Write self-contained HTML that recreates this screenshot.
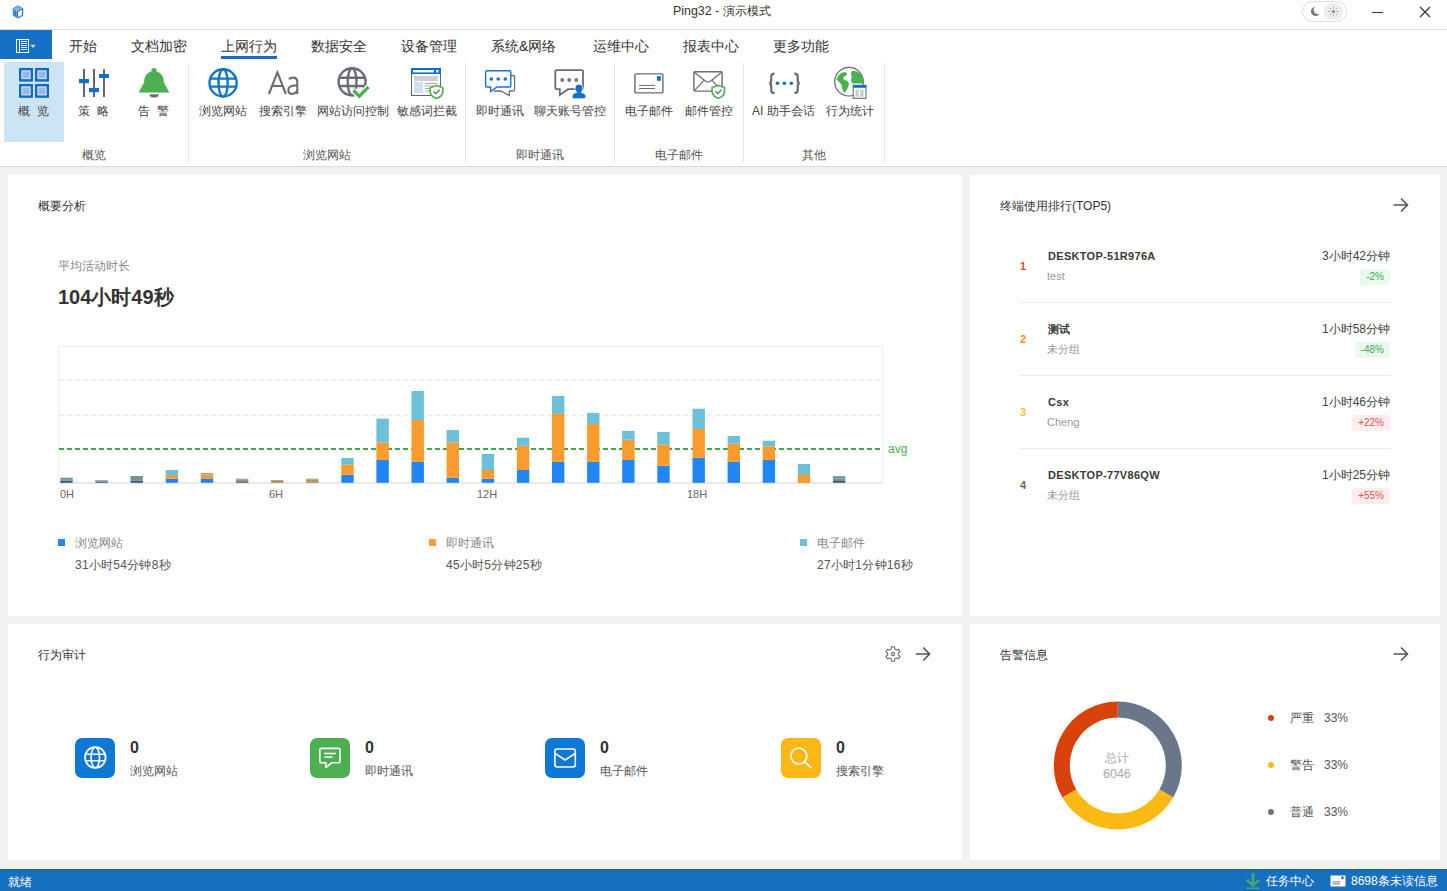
<!DOCTYPE html>
<html><head><meta charset="utf-8">
<style>
*{box-sizing:border-box;margin:0;padding:0}
html,body{width:1447px;height:891px;overflow:hidden;background:#f2f2f2;font-family:"Liberation Sans",sans-serif;color:#333}
.a{position:absolute}
.t{position:absolute;white-space:nowrap;line-height:1}
svg{position:absolute;overflow:visible}
#title{left:0;top:0;width:1447px;height:30px;background:#fff;border-bottom:1px solid #dcdcdc}
#menu{left:0;top:30px;width:1447px;height:30px;background:#fff}
#ribbon{left:0;top:60px;width:1447px;height:107px;background:#fff;border-bottom:1px solid #dadada}
.card{position:absolute;background:#fff}
.sep{position:absolute;width:1px;background:#e3e3e3;top:63px;height:99px}
.rl{font-size:12px;color:#444}
.gl{font-size:12px;color:#555}
.tab{font-size:14px;color:#333}
.rname{font-size:11px;font-weight:bold;color:#3a3a3a;letter-spacing:0.3px}
.badge{font-size:10px;line-height:16px;height:16px;padding:0 6px;border-radius:3px}
#status{left:0;top:869px;width:1447px;height:22px;background:#176fbf;border-top:1px solid #1c5f9f}
</style></head><body>
<!-- title bar -->
<div id="title" class="a"></div>
<div class="t" style="left:673px;top:5px;font-size:12.4px;color:#333">Ping32 - 演示模式</div>
<svg style="left:12px;top:5px" width="12" height="14" viewBox="0 0 12 14">
 <path d="M6 1.2 L10.6 3.8 L10.6 10.2 L6 12.8 L1.4 10.2 L1.4 3.8 Z" fill="#fff" stroke="#2b7fd6" stroke-width="1.3" stroke-linejoin="round"/>
 <path d="M1.6 4 L6 1.5 L10.4 4 L6 6.5 Z" fill="#7db5ee"/>
 <path d="M1.6 4.2 L5.4 6.6 L5.4 12.3 L1.6 10 Z" fill="#5fa1e8"/>
 <path d="M3.3 5.5 V10.6" stroke="#1b62b5" stroke-width="1"/>
 <path d="M5.5 6.6 L10.4 4 M5.5 6.6 V12.4" stroke="#1f6cc0" stroke-width="1"/>
</svg>
<div class="a" style="left:1302px;top:1px;width:45px;height:21px;border:1px solid #ddd;border-radius:11px;background:#fff"></div>
<div class="a" style="left:1324px;top:3px;width:19px;height:17px;border-radius:8px;background:#eee"></div>
<svg style="left:1309px;top:6px" width="11" height="11" viewBox="0 0 11 11"><path d="M6 1 A4.5 4.5 0 1 0 10.5 7.5 A4 4 0 0 1 6 1 Z" fill="#777"/></svg>
<svg style="left:1328px;top:6px" width="11" height="11" viewBox="0 0 11 11"><circle cx="5.5" cy="5.5" r="1.6" fill="#888"/><path d="M5.5 0.5V2.5M5.5 8.5V10.5M0.5 5.5H2.5M8.5 5.5H10.5M2 2L3.2 3.2M7.8 7.8L9 9M2 9L3.2 7.8M7.8 3.2L9 2" stroke="#999" stroke-width="0.9"/></svg>
<div class="a" style="left:1372px;top:12px;width:11px;height:1.3px;background:#333"></div>
<svg style="left:1419px;top:6px" width="12" height="12" viewBox="0 0 12 12"><path d="M1 1L11 11M11 1L1 11" stroke="#333" stroke-width="1.3"/></svg>

<!-- menu -->
<div id="menu" class="a"></div>
<div class="a" style="left:0;top:30px;width:52px;height:29px;background:#1470c4"></div>
<svg style="left:16px;top:39px" width="22" height="14" viewBox="0 0 22 14">
 <rect x="0.5" y="0.5" width="12" height="13" fill="none" stroke="#fff" stroke-width="1"/>
 <path d="M3.5 1V13" stroke="#fff" stroke-width="1"/>
 <path d="M5 2.5H11M5 4.5H11M5 6.5H11M5 8.5H11M5 10.5H11" stroke="#fff" stroke-width="0.9"/>
 <path d="M14.3 5.8L19.7 5.8L17 9Z" fill="#cfe0f5"/>
</svg>
<div class="t tab" style="left:69px;top:39px">开始</div>
<div class="t tab" style="left:131px;top:39px">文档加密</div>
<div class="t tab" style="left:221px;top:39px">上网行为</div>
<div class="a" style="left:221px;top:56px;width:56px;height:3px;background:#1a6ac0"></div>
<div class="t tab" style="left:311px;top:39px">数据安全</div>
<div class="t tab" style="left:401px;top:39px">设备管理</div>
<div class="t tab" style="left:491px;top:39px">系统&amp;网络</div>
<div class="t tab" style="left:593px;top:39px">运维中心</div>
<div class="t tab" style="left:683px;top:39px">报表中心</div>
<div class="t tab" style="left:773px;top:39px">更多功能</div>

<!-- ribbon -->
<div id="ribbon" class="a"></div>
<div class="a" style="left:4px;top:62px;width:60px;height:80px;background:#cde3f6"></div>
<div class="sep" style="left:188px"></div>
<div class="sep" style="left:465px"></div>
<div class="sep" style="left:614px"></div>
<div class="sep" style="left:743px"></div>
<div class="sep" style="left:884px"></div>
<svg style="left:0;top:60px" width="900" height="110" viewBox="0 60 900 110">
 <!-- grid -->
 <g stroke="#0e6cc9" stroke-width="2.4" fill="#93b8e7">
  <rect x="20.2" y="69.2" width="11.6" height="11.2"/><rect x="36.2" y="69.2" width="11.6" height="11.2"/>
  <rect x="20.2" y="85.2" width="11.6" height="11.4"/><rect x="36.2" y="85.2" width="11.6" height="11.4"/>
 </g>
 <g stroke="#e8f1fb" stroke-width="0.8" fill="none">
  <rect x="22" y="71" width="8" height="7.6"/><rect x="38" y="71" width="8" height="7.6"/>
  <rect x="22" y="87" width="8" height="7.8"/><rect x="38" y="87" width="8" height="7.8"/>
 </g>
 <!-- sliders -->
 <g fill="#62666d"><rect x="83" y="69" width="2" height="28"/><rect x="93" y="69" width="2" height="28"/><rect x="103" y="69" width="2" height="28"/></g>
 <g fill="#1270cc"><rect x="79" y="79" width="10" height="4.2"/><rect x="89" y="88" width="10" height="4.2"/><rect x="99" y="74" width="10" height="4.1"/></g>
 <!-- bell -->
 <path d="M149.5 94.2 A4.65 3.4 0 0 0 158.8 94.2 Z" fill="#6b7079"/>
 <circle cx="154" cy="70.6" r="2.6" fill="#4caf50"/>
 <path d="M139 92.2 L144.4 82.5 C144.4 75.8 147.8 71.6 154 71.6 C160.2 71.6 163.6 75.8 163.6 82.5 L168.9 92.2 Z" fill="#4caf50" stroke="#4caf50" stroke-width="0.6" stroke-linejoin="round"/>
 <!-- globe blue -->
 <g fill="none" stroke="#1473cc" stroke-width="2.4">
  <circle cx="223.1" cy="82.9" r="13.6"/>
  <ellipse cx="223.1" cy="82.9" rx="4.6" ry="13.6"/>
  <path d="M210 78.6H236.2M210 86.6H236.2"/>
 </g>
 <!-- globe gray + check -->
 <g fill="none" stroke="#686c74" stroke-width="2.4">
  <circle cx="352.1" cy="81.8" r="13.5"/>
  <ellipse cx="352.1" cy="81.8" rx="4.4" ry="13.5"/>
  <path d="M339 77.8H365.2M339 86H365.2"/>
 </g>
 <path d="M353.5 90.5 L359.4 96.2 L368.5 86.8" fill="none" stroke="#fff" stroke-width="6"/>
 <path d="M353.5 90.5 L359.4 96.2 L368.5 86.8" fill="none" stroke="#4caf50" stroke-width="3.2"/>
 <!-- window shield -->
 <rect x="411.5" y="68.5" width="29" height="27" fill="#fff" stroke="#5f6670" stroke-width="1"/>
 <rect x="411" y="68" width="30" height="6" fill="#0f6dc8"/>
 <rect x="413" y="70" width="21" height="2.4" fill="#fff"/><rect x="436" y="70" width="2.6" height="2.4" fill="#fff"/>
 <rect x="414" y="76" width="24" height="5" fill="#cfcfd1"/>
 <rect x="414" y="82" width="9" height="11" fill="#cfe1f3"/>
 <g stroke="#8a8e94" stroke-width="0.8"><path d="M425 83.5H437M425 86H434M425 88.5H432M425 91H431"/></g>
 <path d="M436.5 85.6 L442.8 87.8 L442.8 91.5 C442.8 95 440 97.3 436.5 98.5 C433 97.3 430.2 95 430.2 91.5 L430.2 87.8 Z" fill="#fff" stroke="#4caf50" stroke-width="1.6"/>
 <path d="M433.5 91.5 L435.8 93.7 L439.6 89.8" fill="none" stroke="#5f6670" stroke-width="1.3"/>
 <!-- chat blue -->
 <path d="M494 75.5 H513 Q514.6 75.5 514.6 77 V89.5 Q514.6 91 513 91 H509.3 V95.6 L501 91 H494" fill="#fff" stroke="#6b6f76" stroke-width="1.3"/>
 <path d="M487 70.8 H509.3 Q510.8 70.8 510.8 72.3 V85.5 Q510.8 87 509.3 87 H497 L490.6 91.6 V87 H487 Q485.6 87 485.6 85.5 V72.3 Q485.6 70.8 487 70.8 Z" fill="#fff" stroke="#1873cc" stroke-width="1.4"/>
 <g fill="#1873cc"><circle cx="491.3" cy="79" r="1.8"/><circle cx="498.2" cy="79" r="1.8"/><circle cx="505.3" cy="79" r="1.8"/></g>
 <!-- chat gray person -->
 <path d="M556.5 70.2 H581.8 Q583 70.2 583 71.5 V88 Q583 89.2 581.8 89.2 H568 L559.8 95 V89.2 H556.5 Q555.3 89.2 555.3 88 V71.5 Q555.3 70.2 556.5 70.2 Z" fill="#fff" stroke="#686c74" stroke-width="1.8"/>
 <g fill="#73777e"><circle cx="562.2" cy="80" r="1.9"/><circle cx="569.2" cy="80" r="1.9"/><circle cx="576.3" cy="80" r="1.9"/></g>
 <path d="M578.9 84.2 C576.5 84.2 575 86 575 88.5 C575 90.3 575.8 91.6 576.9 92.3 C573.5 93.2 572 94.6 572 97 Q572 98.8 574 98.8 H584 Q586 98.8 586 97 C586 94.6 584.5 93.2 581 92.3 C582.1 91.6 582.9 90.3 582.9 88.5 C582.9 86 581.3 84.2 578.9 84.2 Z" fill="#1270cc" stroke="#fff" stroke-width="0.8"/>
 <!-- envelope 1 -->
 <rect x="634.9" y="73.9" width="28" height="19" rx="1" fill="#fff" stroke="#686c74" stroke-width="1.4"/>
 <rect x="657" y="76.1" width="3.8" height="4.7" fill="#1270cc"/>
 <path d="M639.1 85.4H654.9M639.1 88.5H654.9" stroke="#686c74" stroke-width="1"/>
 <!-- envelope 2 -->
 <rect x="693.9" y="71.7" width="28.2" height="19.4" rx="1" fill="#fff" stroke="#686c74" stroke-width="1.4"/>
 <path d="M694.3 72.3 L705 80.8 Q708 83.2 711 80.8 L721.7 72.3 M694.3 90.6 L703.8 80.6 M712.2 80.6 L721.7 90.6" fill="none" stroke="#686c74" stroke-width="1.2"/>
 <path d="M718.3 85.4 L724.5 87.6 L724.5 91.3 C724.5 94.8 721.8 97.1 718.3 98.3 C714.8 97.1 712.1 94.8 712.1 91.3 L712.1 87.6 Z" fill="#fff" stroke="#4caf50" stroke-width="1.6"/>
 <path d="M715.4 91.4 L717.7 93.6 L721.4 89.7" fill="none" stroke="#5f6670" stroke-width="1.3"/>
 <!-- braces -->
 <g fill="none" stroke="#686c74" stroke-width="2.2">
  <path d="M774.5 73.6 Q771.2 73.6 771.2 76.5 V80.8 Q771.2 83 769.3 83.3 Q771.2 83.6 771.2 85.8 V90.2 Q771.2 93 774.5 93"/>
  <path d="M794.4 73.6 Q797.7 73.6 797.7 76.5 V80.8 Q797.7 83 799.6 83.3 Q797.7 83.6 797.7 85.8 V90.2 Q797.7 93 794.4 93"/>
 </g>
 <g fill="#1270cc"><circle cx="777.5" cy="83.2" r="1.8"/><circle cx="784.4" cy="83.2" r="1.8"/><circle cx="791.3" cy="83.2" r="1.8"/></g>
 <!-- globe chart -->
 <circle cx="849" cy="81.7" r="14.3" fill="#fff" stroke="#65686e" stroke-width="1.2"/>
 <path d="M840 74 C842 72 846 71.5 847 73.5 C847.5 75 845 76 843.5 77.5 C842.5 78.5 844 80 846 80.5 C848.5 81 849.5 83 848.5 86 C847.8 88.5 846 90.5 845 93 C842.5 91.5 842 88 841.5 85.5 C841 83 838 81 836.5 79.5 C837 77.5 838.5 75.5 840 74 Z" fill="#4caf50"/>
 <path d="M852.5 71 C856 70.5 860 72.5 862 75.5 C863.5 78 863.5 81 862.5 83.5 L853 83.5 C851 82.5 850.5 80 851.5 78 C852.5 76 850.5 74.5 851 73 C851.3 72 851.8 71.3 852.5 71 Z" fill="#4caf50"/>
 <rect x="853.2" y="85.3" width="12.8" height="13" fill="#fff" stroke="#5f6368" stroke-width="1"/>
 <rect x="853" y="85" width="13.2" height="2.8" fill="#1270cc"/>
 <rect x="855.5" y="89.5" width="3.3" height="7.3" fill="#c9cbce"/><rect x="860.2" y="89.5" width="3.3" height="7.3" fill="#c9cbce"/>
</svg>
<svg style="left:260px;top:66px" width="45" height="32" viewBox="260 66 45 32"><g fill="none" stroke="#696d76" stroke-width="2.1"><path d="M268.9 94 L277.4 72.4 L285.9 94 M271.6 86 H283.2"/><path d="M288.9 79.3 C290 78.2 291.5 77.6 293.2 77.6 C296 77.6 297.3 79.3 297.3 82.2 V94 M297.3 85.2 C293.5 85.2 288.3 85.6 288.3 89.9 C288.3 92.4 289.9 93.9 292.2 93.9 C294.8 93.9 296.6 92.3 297.3 90"/></g></svg>

<div class="t rl" style="left:18px;top:105px">概&nbsp;&nbsp;览</div>
<div class="t rl" style="left:78px;top:105px">策&nbsp;&nbsp;略</div>
<div class="t rl" style="left:138px;top:105px">告&nbsp;&nbsp;警</div>
<div class="t rl" style="left:199px;top:105px">浏览网站</div>
<div class="t rl" style="left:259px;top:105px">搜索引擎</div>
<div class="t rl" style="left:317px;top:105px">网站访问控制</div>
<div class="t rl" style="left:397px;top:105px">敏感词拦截</div>
<div class="t rl" style="left:476px;top:105px">即时通讯</div>
<div class="t rl" style="left:534px;top:105px">聊天账号管控</div>
<div class="t rl" style="left:625px;top:105px">电子邮件</div>
<div class="t rl" style="left:685px;top:105px">邮件管控</div>
<div class="t rl" style="left:752px;top:105px">AI 助手会话</div>
<div class="t rl" style="left:826px;top:105px">行为统计</div>
<div class="t gl" style="left:82px;top:149px">概览</div>
<div class="t gl" style="left:303px;top:149px">浏览网站</div>
<div class="t gl" style="left:516px;top:149px">即时通讯</div>
<div class="t gl" style="left:655px;top:149px">电子邮件</div>
<div class="t gl" style="left:802px;top:149px">其他</div>

<!-- cards -->
<div class="card" style="left:8px;top:175px;width:954px;height:441px"></div>
<div class="card" style="left:970px;top:175px;width:470px;height:441px"></div>
<div class="card" style="left:8px;top:624px;width:954px;height:236px"></div>
<div class="card" style="left:970px;top:624px;width:470px;height:236px"></div>

<div class="t" style="left:38px;top:200px;font-size:12px;color:#333">概要分析</div>
<div class="t" style="left:58px;top:260px;font-size:12px;color:#888">平均活动时长</div>
<div class="t" style="left:58px;top:287px;font-size:20px;font-weight:bold;color:#333">104小时49秒</div>
<svg style="left:0;top:340px" width="960" height="170" viewBox="0 340 960 170">
 <rect x="58.5" y="346.5" width="824" height="136.5" fill="none" stroke="#efefef" stroke-width="1"/>
 <path d="M59 380H882M59 415H882" stroke="#e2e2e2" stroke-width="1.2" stroke-dasharray="5 3"/>
 <path d="M59 483H882" stroke="#e6e6e6" stroke-width="1.5"/>
 <path d="M59 449H882" stroke="#46a24c" stroke-width="2" stroke-dasharray="5 3"/>
 <rect x="60.3" y="480.5" width="12.4" height="2.3" fill="#2e5c8e"/>
<rect x="60.3" y="479.2" width="12.4" height="1.3" fill="#8b8d78"/>
<rect x="60.3" y="477.7" width="12.4" height="1.5" fill="#5b97ab"/>
<rect x="95.4" y="481.5" width="12.4" height="1.3" fill="#2e5c8e"/>
<rect x="95.4" y="480.5" width="12.4" height="1.0" fill="#8b8d78"/>
<rect x="95.4" y="480.0" width="12.4" height="0.5" fill="#5b97ab"/>
<rect x="130.5" y="480.5" width="12.4" height="2.3" fill="#2e5c8e"/>
<rect x="130.5" y="478.0" width="12.4" height="2.5" fill="#8b8d78"/>
<rect x="130.5" y="476.0" width="12.4" height="2.0" fill="#5b97ab"/>
<rect x="165.7" y="478.7" width="12.4" height="4.1" fill="#1f86f3"/>
<rect x="165.7" y="475.0" width="12.4" height="3.7" fill="#f99c2d"/>
<rect x="165.7" y="470.0" width="12.4" height="5.0" fill="#6cc0d8"/>
<rect x="200.8" y="479.0" width="12.4" height="3.8" fill="#1f86f3"/>
<rect x="200.8" y="474.5" width="12.4" height="4.5" fill="#f99c2d"/>
<rect x="200.8" y="473.0" width="12.4" height="1.5" fill="#8fa6a8"/>
<rect x="235.9" y="481.3" width="12.4" height="1.5" fill="#3d5f86"/>
<rect x="235.9" y="479.5" width="12.4" height="1.8" fill="#c08a45"/>
<rect x="235.9" y="478.7" width="12.4" height="0.8" fill="#5b97ab"/>
<rect x="271.0" y="482.0" width="12.4" height="0.8" fill="#9a8f70"/>
<rect x="271.0" y="480.5" width="12.4" height="1.5" fill="#c08a45"/>
<rect x="271.0" y="480.0" width="12.4" height="0.5" fill="#5b97ab"/>
<rect x="306.1" y="481.3" width="12.4" height="1.5" fill="#9a8f70"/>
<rect x="306.1" y="479.5" width="12.4" height="1.8" fill="#c08a45"/>
<rect x="306.1" y="478.7" width="12.4" height="0.8" fill="#9a8f70"/>
<rect x="341.3" y="474.8" width="12.4" height="8.0" fill="#1f86f3"/>
<rect x="341.3" y="464.6" width="12.4" height="10.2" fill="#f99c2d"/>
<rect x="341.3" y="458.0" width="12.4" height="6.6" fill="#6cc0d8"/>
<rect x="376.4" y="459.9" width="12.4" height="22.9" fill="#1f86f3"/>
<rect x="376.4" y="442.5" width="12.4" height="17.4" fill="#f99c2d"/>
<rect x="376.4" y="418.7" width="12.4" height="23.8" fill="#6cc0d8"/>
<rect x="411.5" y="461.9" width="12.4" height="20.9" fill="#1f86f3"/>
<rect x="411.5" y="420.0" width="12.4" height="41.9" fill="#f99c2d"/>
<rect x="411.5" y="391.0" width="12.4" height="29.0" fill="#6cc0d8"/>
<rect x="446.6" y="477.7" width="12.4" height="5.1" fill="#1f86f3"/>
<rect x="446.6" y="442.5" width="12.4" height="35.2" fill="#f99c2d"/>
<rect x="446.6" y="430.0" width="12.4" height="12.5" fill="#6cc0d8"/>
<rect x="481.7" y="478.7" width="12.4" height="4.1" fill="#1f86f3"/>
<rect x="481.7" y="470.0" width="12.4" height="8.7" fill="#f99c2d"/>
<rect x="481.7" y="453.9" width="12.4" height="16.1" fill="#6cc0d8"/>
<rect x="516.9" y="470.0" width="12.4" height="12.8" fill="#1f86f3"/>
<rect x="516.9" y="445.8" width="12.4" height="24.2" fill="#f99c2d"/>
<rect x="516.9" y="437.7" width="12.4" height="8.1" fill="#6cc0d8"/>
<rect x="552.0" y="461.9" width="12.4" height="20.9" fill="#1f86f3"/>
<rect x="552.0" y="413.9" width="12.4" height="48.0" fill="#f99c2d"/>
<rect x="552.0" y="395.9" width="12.4" height="18.0" fill="#6cc0d8"/>
<rect x="587.1" y="461.9" width="12.4" height="20.9" fill="#1f86f3"/>
<rect x="587.1" y="423.9" width="12.4" height="38.0" fill="#f99c2d"/>
<rect x="587.1" y="412.9" width="12.4" height="11.0" fill="#6cc0d8"/>
<rect x="622.2" y="460.0" width="12.4" height="22.8" fill="#1f86f3"/>
<rect x="622.2" y="439.7" width="12.4" height="20.3" fill="#f99c2d"/>
<rect x="622.2" y="430.9" width="12.4" height="8.8" fill="#6cc0d8"/>
<rect x="657.3" y="465.8" width="12.4" height="17.0" fill="#1f86f3"/>
<rect x="657.3" y="444.6" width="12.4" height="21.2" fill="#f99c2d"/>
<rect x="657.3" y="432.0" width="12.4" height="12.6" fill="#6cc0d8"/>
<rect x="692.5" y="457.8" width="12.4" height="25.0" fill="#1f86f3"/>
<rect x="692.5" y="429.0" width="12.4" height="28.8" fill="#f99c2d"/>
<rect x="692.5" y="408.7" width="12.4" height="20.3" fill="#6cc0d8"/>
<rect x="727.6" y="461.8" width="12.4" height="21.0" fill="#1f86f3"/>
<rect x="727.6" y="443.7" width="12.4" height="18.1" fill="#f99c2d"/>
<rect x="727.6" y="436.0" width="12.4" height="7.7" fill="#6cc0d8"/>
<rect x="762.7" y="460.0" width="12.4" height="22.8" fill="#1f86f3"/>
<rect x="762.7" y="446.3" width="12.4" height="13.7" fill="#f99c2d"/>
<rect x="762.7" y="440.8" width="12.4" height="5.5" fill="#6cc0d8"/>
<rect x="797.8" y="483.0" width="12.4" height="-0.2" fill="#1f86f3"/>
<rect x="797.8" y="475.0" width="12.4" height="8.0" fill="#f99c2d"/>
<rect x="797.8" y="464.0" width="12.4" height="11.0" fill="#6cc0d8"/>
<rect x="832.9" y="481.0" width="12.4" height="1.8" fill="#2e5c8e"/>
<rect x="832.9" y="478.5" width="12.4" height="2.5" fill="#8b8d78"/>
<rect x="832.9" y="476.2" width="12.4" height="2.3" fill="#5b97ab"/>
</svg>
<div class="t" style="left:888px;top:443px;font-size:12px;color:#4caf50">avg</div>
<div class="t" style="left:60px;top:489px;font-size:11px;color:#666">0H</div>
<div class="t" style="left:269px;top:489px;font-size:11px;color:#666">6H</div>
<div class="t" style="left:477px;top:489px;font-size:11px;color:#666">12H</div>
<div class="t" style="left:687px;top:489px;font-size:11px;color:#666">18H</div>
<div class="a" style="left:58px;top:539px;width:7px;height:7px;background:#1f86f3"></div>
<div class="t" style="left:75px;top:537px;font-size:12px;color:#888">浏览网站</div>
<div class="t" style="left:75px;top:559px;font-size:12px;color:#555;letter-spacing:0.25px">31小时54分钟8秒</div>
<div class="a" style="left:429px;top:539px;width:7px;height:7px;background:#f0a040"></div>
<div class="t" style="left:446px;top:537px;font-size:12px;color:#888">即时通讯</div>
<div class="t" style="left:446px;top:559px;font-size:12px;color:#555;letter-spacing:0.25px">45小时5分钟25秒</div>
<div class="a" style="left:800px;top:539px;width:7px;height:7px;background:#6cc0d8"></div>
<div class="t" style="left:817px;top:537px;font-size:12px;color:#888">电子邮件</div>
<div class="t" style="left:817px;top:559px;font-size:12px;color:#555;letter-spacing:0.25px">27小时1分钟16秒</div>
<div class="t" style="left:1000px;top:200px;font-size:12px;color:#333">终端使用排行(TOP5)</div>
<svg style="left:1392px;top:197px" width="17" height="16" viewBox="0 0 17 16"><path d="M1.5 8H15.5M9 1.5L15.5 8L9 14.5" fill="none" stroke="#555" stroke-width="1.6"/></svg>
<div class="t" style="left:1020px;top:260.5px;font-size:11px;font-weight:bold;color:#d8501c">1</div>
<div class="t rname" style="left:1048px;top:251px">DESKTOP-51R976A</div>
<div class="t" style="left:1047px;top:271px;font-size:11px;color:#999">test</div>
<div class="t" style="right:57px;top:250px;font-size:12px;color:#444">3小时42分钟</div>
<div class="t badge" style="right:57px;top:269px;background:#eaf8ee;color:#3dae5a">-2%</div>
<div class="a" style="left:1019px;top:302px;width:372px;height:1px;background:#ececec"></div>
<div class="t" style="left:1020px;top:333.5px;font-size:11px;font-weight:bold;color:#e8912d">2</div>
<div class="t rname" style="left:1048px;top:324px">测试</div>
<div class="t" style="left:1047px;top:344px;font-size:11px;color:#999">未分组</div>
<div class="t" style="right:57px;top:323px;font-size:12px;color:#444">1小时58分钟</div>
<div class="t badge" style="right:57px;top:342px;background:#eaf8ee;color:#3dae5a">-48%</div>
<div class="a" style="left:1019px;top:375px;width:372px;height:1px;background:#ececec"></div>
<div class="t" style="left:1020px;top:406.5px;font-size:11px;font-weight:bold;color:#f4bf2a">3</div>
<div class="t rname" style="left:1048px;top:397px">Csx</div>
<div class="t" style="left:1047px;top:417px;font-size:11px;color:#999">Cheng</div>
<div class="t" style="right:57px;top:396px;font-size:12px;color:#444">1小时46分钟</div>
<div class="t badge" style="right:57px;top:415px;background:#fdeded;color:#d9534f">+22%</div>
<div class="a" style="left:1019px;top:448px;width:372px;height:1px;background:#ececec"></div>
<div class="t" style="left:1020px;top:479.5px;font-size:11px;font-weight:bold;color:#666">4</div>
<div class="t rname" style="left:1048px;top:470px">DESKTOP-77V86QW</div>
<div class="t" style="left:1047px;top:490px;font-size:11px;color:#999">未分组</div>
<div class="t" style="right:57px;top:469px;font-size:12px;color:#444">1小时25分钟</div>
<div class="t badge" style="right:57px;top:488px;background:#fdeded;color:#d9534f">+55%</div>
<div class="t" style="left:38px;top:649px;font-size:12px;color:#333">行为审计</div>
<svg style="left:884px;top:645px" width="18" height="18" viewBox="0 0 18 18"><path d="M7.6 1.8 H10.4 L10.9 4.1 L12.4 5 L14.6 4.2 L16 6.6 L14.3 8.2 V9.8 L16 11.4 L14.6 13.8 L12.4 13 L10.9 13.9 L10.4 16.2 H7.6 L7.1 13.9 L5.6 13 L3.4 13.8 L2 11.4 L3.7 9.8 V8.2 L2 6.6 L3.4 4.2 L5.6 5 L7.1 4.1 Z" fill="none" stroke="#666" stroke-width="1.1" stroke-linejoin="round"/><circle cx="9" cy="9" r="1.6" fill="none" stroke="#666" stroke-width="1.1"/></svg>
<svg style="left:915px;top:646px" width="16" height="16" viewBox="0 0 16 16"><path d="M0.8 8H14.5M8.2 1.5L14.6 8L8.2 14.5" fill="none" stroke="#555" stroke-width="1.6"/></svg>
<div class="a" style="left:75px;top:738px;width:40px;height:40px;border-radius:7px;background:#0e78d6"></div>
<svg style="left:75px;top:738px" width="40" height="40" viewBox="0 0 40 40"><circle cx="20.3" cy="19.5" r="10.3" fill="none" stroke="#fff" stroke-width="1.8"/><ellipse cx="20.3" cy="19.5" rx="4.2" ry="10.3" fill="none" stroke="#fff" stroke-width="1.6"/><path d="M10.5 16.2H30M10.5 22.8H30" stroke="#fff" stroke-width="1.6"/></svg>
<div class="t" style="left:130px;top:740px;font-size:16px;font-weight:bold;color:#333">0</div>
<div class="t" style="left:130px;top:765px;font-size:12px;color:#555">浏览网站</div>
<div class="a" style="left:310px;top:738px;width:40px;height:40px;border-radius:7px;background:#4caf50"></div>
<svg style="left:310px;top:738px" width="40" height="40" viewBox="0 0 40 40"><path d="M11.4 10.4 H28.4 Q30 10.4 30 12 V23.2 Q30 24.8 28.4 24.8 H21.5 L15.9 29.6 V24.8 H11.4 Q9.8 24.8 9.8 23.2 V12 Q9.8 10.4 11.4 10.4 Z" fill="none" stroke="#fff" stroke-width="1.6" stroke-linejoin="round"/><path d="M14 15.4H26M14.5 18.9H22.5" stroke="#fff" stroke-width="1.5"/></svg>
<div class="t" style="left:365px;top:740px;font-size:16px;font-weight:bold;color:#333">0</div>
<div class="t" style="left:365px;top:765px;font-size:12px;color:#555">即时通讯</div>
<div class="a" style="left:545px;top:738px;width:40px;height:40px;border-radius:7px;background:#0e78d6"></div>
<svg style="left:545px;top:738px" width="40" height="40" viewBox="0 0 40 40"><rect x="9.9" y="11" width="20.4" height="18" rx="2.2" fill="none" stroke="#fff" stroke-width="1.6"/><path d="M10 15.4 L20.1 22 L30.2 15.4" fill="none" stroke="#fff" stroke-width="1.6" stroke-linejoin="round"/></svg>
<div class="t" style="left:600px;top:740px;font-size:16px;font-weight:bold;color:#333">0</div>
<div class="t" style="left:600px;top:765px;font-size:12px;color:#555">电子邮件</div>
<div class="a" style="left:781px;top:738px;width:40px;height:40px;border-radius:7px;background:#fdb714"></div>
<svg style="left:781px;top:738px" width="40" height="40" viewBox="0 0 40 40"><circle cx="17.8" cy="18" r="8" fill="none" stroke="#fff" stroke-width="1.6"/><path d="M23.6 23.8 L30 29.6" stroke="#fff" stroke-width="1.8" stroke-linecap="round"/></svg>
<div class="t" style="left:836px;top:740px;font-size:16px;font-weight:bold;color:#333">0</div>
<div class="t" style="left:836px;top:765px;font-size:12px;color:#555">搜索引擎</div>
<div class="t" style="left:1000px;top:649px;font-size:12px;color:#333">告警信息</div>
<svg style="left:1392px;top:646px" width="17" height="16" viewBox="0 0 17 16"><path d="M1.5 8H15.5M9 1.5L15.5 8L9 14.5" fill="none" stroke="#555" stroke-width="1.6"/></svg>
<svg style="left:0;top:690px" width="1447" height="150" viewBox="0 690 1447 150"><path d="M1117.80 701.50 A64 64 0 0 1 1173.23 797.50 L1159.37 789.50 A48 48 0 0 0 1117.80 717.50 Z" fill="#6a7789"/><path d="M1173.23 797.50 A64 64 0 0 1 1062.37 797.50 L1076.23 789.50 A48 48 0 0 0 1159.37 789.50 Z" fill="#fcb813"/><path d="M1062.37 797.50 A64 64 0 0 1 1117.80 701.50 L1117.80 717.50 A48 48 0 0 0 1076.23 789.50 Z" fill="#d9420b"/></svg>
<div class="t" style="left:1105px;top:752px;font-size:12px;color:#aaa">总计</div>
<div class="t" style="left:1103px;top:768px;font-size:12.5px;color:#aaa">6046</div>
<div class="a" style="left:1268px;top:715.2px;width:6px;height:6px;border-radius:3px;background:#d9420b"></div>
<div class="t" style="left:1290px;top:711.7px;font-size:12px;color:#555">严重&nbsp;&nbsp;&nbsp;33%</div>
<div class="a" style="left:1268px;top:762.2px;width:6px;height:6px;border-radius:3px;background:#fcb813"></div>
<div class="t" style="left:1290px;top:758.7px;font-size:12px;color:#555">警告&nbsp;&nbsp;&nbsp;33%</div>
<div class="a" style="left:1268px;top:809.2px;width:6px;height:6px;border-radius:3px;background:#6a7789"></div>
<div class="t" style="left:1290px;top:805.7px;font-size:12px;color:#555">普通&nbsp;&nbsp;&nbsp;33%</div>


<!-- status -->
<div id="status" class="a"></div>
<svg style="left:1245px;top:872px" width="16" height="18" viewBox="0 0 16 18"><path d="M8 1V13.5" stroke="#4aa37c" stroke-width="2.6"/><path d="M1.8 7.8L8 13.5L14.2 7.8" fill="none" stroke="#4aa37c" stroke-width="2.4"/><path d="M1.5 16.3H14.5" stroke="#4aa37c" stroke-width="1.6"/></svg>
<div class="t" style="left:1266px;top:875px;font-size:12px;color:#fff">任务中心</div>
<svg style="left:1330px;top:875px" width="16" height="12" viewBox="0 0 16 12"><rect x="0.5" y="0.5" width="15" height="11" fill="#fff"/><rect x="11.5" y="1.5" width="2" height="2.6" fill="#1a4f8a"/><path d="M2.5 6.8H10M2.5 8.8H10" stroke="#7a6a5a" stroke-width="0.9"/></svg>
<div class="t" style="left:1351px;top:875px;font-size:12px;color:#fff">8698条未读信息</div>
<div class="t" style="left:8px;top:876px;font-size:12px;color:#fff">就绪</div>
</body></html>
